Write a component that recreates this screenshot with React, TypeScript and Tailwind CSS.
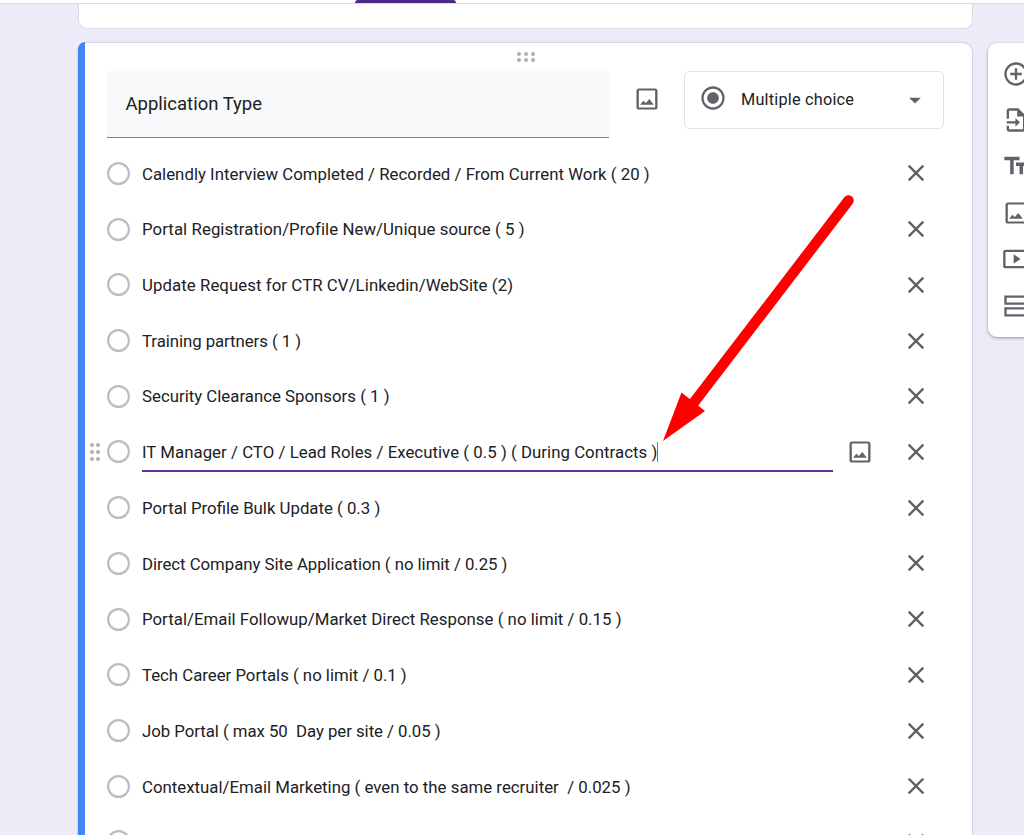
import type { ReactNode } from 'react';

interface Option { label: string; spacing: string; active?: boolean }

const OPTIONS: Option[] = [
  { label: 'Calendly Interview Completed / Recorded / From Current Work ( 20 )', spacing: 'tracking-[0.02px]' },
  { label: 'Portal Registration/Profile New/Unique source ( 5 )', spacing: 'tracking-[0.07px]' },
  { label: 'Update Request for CTR CV/Linkedin/WebSite (2)', spacing: 'tracking-[0.075px]' },
  { label: 'Training partners ( 1 )', spacing: 'tracking-[-0.06px]' },
  { label: 'Security Clearance Sponsors ( 1 )', spacing: 'tracking-[0.01px]' },
  { label: 'IT Manager / CTO / Lead Roles / Executive ( 0.5 ) ( During Contracts )', spacing: 'tracking-[0.04px]', active: true },
  { label: 'Portal Profile Bulk Update ( 0.3 )', spacing: 'tracking-normal' },
  { label: 'Direct Company Site Application ( no limit / 0.25 )', spacing: 'tracking-[-0.04px]' },
  { label: 'Portal/Email Followup/Market Direct Response ( no limit / 0.15 )', spacing: 'tracking-[0.03px]' },
  { label: 'Tech Career Portals ( no limit / 0.1 )', spacing: 'tracking-[-0.01px]' },
  { label: 'Job Portal ( max 50  Day per site / 0.05 )', spacing: 'tracking-[-0.04px]' },
  { label: 'Contextual/Email Marketing ( even to the same recruiter  / 0.025 )', spacing: 'tracking-[0.015px]' },
  { label: '', spacing: 'tracking-normal' },
];

function Icon({ children, className = '' }: { children: ReactNode; className?: string }) {
  return (
    <svg viewBox="0 0 24 24" fill="currentColor" className={`w-7 h-7 shrink-0 text-[#5f6368] ${className}`}>
      {children}
    </svg>
  );
}

function ImageIcon() {
  return (
    <Icon>
      <path d="M19 4.8v14.4H5V4.8h14M19 3H5c-1.1 0-2 .9-2 2v14c0 1.1.9 2 2 2h14c1.1 0 2-.9 2-2V5c0-1.1-.9-2-2-2z" />
      <path d="M6.2 17l2.6-3.6 2.3 2 2.9-3.5 3.8 5.1z" />
    </Icon>
  );
}

function CloseIcon() {
  return (
    <Icon>
      <path d="M19 6.41 17.59 5 12 10.59 6.41 5 5 6.41 10.59 12 5 17.59 6.41 19 12 13.41 17.59 19 19 17.59 13.41 12z" />
    </Icon>
  );
}

function Dots({ cols, rows, className }: { cols: number; rows: number; className: string }) {
  return (
    <div className={className}>
      {Array.from({ length: cols * rows }, (_, i) => (
        <span key={i} className="w-[4px] h-[4px] rounded-full bg-[#b0b0b0]" />
      ))}
    </div>
  );
}

function OptionRow({ label, spacing, active }: Option) {
  return (
    <div className="flex items-center h-[55.72px] shrink-0">
      <div className="w-[22px] shrink-0 flex justify-center pr-[2px]">
        {active && <Dots cols={2} rows={3} className="grid grid-cols-2 gap-x-[2px] gap-y-[3px]" />}
      </div>
      <svg viewBox="0 0 23 23" className="w-[23px] h-[23px] shrink-0">
        <circle cx="11.5" cy="11.5" r="10.4" fill="none" stroke="#bdbdbd" strokeWidth="2.2" />
      </svg>
      <div className={`ml-3 mt-px w-[691px] h-[39px] shrink-0 flex items-center border-b-2 ${active ? 'border-[#5b359b]' : 'border-transparent'}`}>
        <span className={`text-[16.8px] leading-6 whitespace-pre pt-[1.5px] ${spacing}`}>{label}</span>
        {active && <span className="w-px h-5 mt-px bg-[#777]" />}
      </div>
      <div className="ml-[13px] w-7 h-7 shrink-0">{active && <ImageIcon />}</div>
      <div className="ml-[27.9px]"><CloseIcon /></div>
    </div>
  );
}

function Toolbar() {
  return (
    <aside className="w-[56px] h-[294px] shrink-0 bg-white rounded-[9px] shadow-[0_1px_3px_rgba(60,64,67,0.5)] flex flex-col items-center pt-[7.5px]">
      <div className="h-[46.4px] flex items-center">
        <Icon>
          <path d="M13 7h-2v4H7v2h4v4h2v-4h4v-2h-4V7zm-1-5C6.48 2 2 6.48 2 12s4.48 10 10 10 10-4.48 10-10S17.52 2 12 2zm0 18c-4.41 0-8-3.59-8-8s3.59-8 8-8 8 3.59 8 8-3.59 8-8 8z" />
        </Icon>
      </div>
      <div className="h-[46.4px] flex items-center">
        <Icon>
          <path d="M14 2H6c-1.1 0-2 .9-2 2v7h2V4h7v5h5v11H6v-3H4v3c0 1.1.9 2 2 2h12c1.1 0 2-.9 2-2V8z" />
          <path d="M11.5 10.2v2.900H4v1.800h7.500v2.900l3.800-3.800z" />
        </Icon>
      </div>
      <div className="h-[46.4px] flex items-center">
        <Icon><path d="M2 4v3h5v12h3V7h5V4H2zm19 5h-9v3h3v7h3v-7h3V9z" /></Icon>
      </div>
      <div className="h-[46.4px] flex items-center"><ImageIcon /></div>
      <div className="h-[46.4px] flex items-center">
        <Icon>
          <path d="M10 8v8l6-4z" />
          <path d="M21 4H3c-1.1 0-2 .9-2 2v12c0 1.1.9 2 2 2h18c1.1 0 2-.9 2-2V6c0-1.1-.9-2-2-2zm0 14H3V6h18v12z" />
        </Icon>
      </div>
      <div className="h-[46.4px] flex items-center">
        <Icon>
          <path d="M2 3h20v8H2zM4 5v4h16V5zM2 13h20v8H2zM4 15v4h16v-4z" fillRule="evenodd" />
        </Icon>
      </div>
    </aside>
  );
}

export default function App() {
  return (
    <div className="relative w-[1024px] h-[835px] overflow-hidden bg-[#efeaf8] font-[Roboto,sans-serif] text-[#202124]">
      <header className="h-1 bg-white border-b border-[#dadce0] pl-[355px]">
        <div className="w-[101px] h-[3px] bg-[#4c2b87] rounded-t-[3px]" />
      </header>

      <div className="ml-[78px] w-[895px] h-[25px] bg-white border border-t-0 border-[#dadce0] rounded-b-[9px]" />

      <div className="flex items-start gap-[16px] pl-[78px] pt-[14px]">
        <main className="relative w-[894px] h-[810px] shrink-0 bg-white rounded-[9px] shadow-[0_0_2px_rgba(60,64,67,0.45)] flex flex-col">
          <div className="absolute left-0 -top-px w-[6.5px] h-[812px] bg-[#4285f4] rounded-tl-[8px]" />
          <Dots cols={3} rows={2} className="grid grid-cols-3 gap-x-[3px] gap-y-[2px] w-[18px] ml-[438.5px] mt-[9px]" />

          <div className="flex items-start pl-[29px] mt-[9px] h-[67px]">
            <div className="w-[502px] h-[67px] bg-[#f8f9fa] border-b border-[#80868b] flex items-center pl-[18.5px]">
              <span className="text-[18.5px] leading-7">Application Type</span>
            </div>
            <div className="ml-[24px] mt-[14px]"><ImageIcon /></div>
            <div className="ml-[23px] w-[260px] h-[58px] rounded-[5px] border border-[#e0e1e4] flex items-center pl-[13.5px]">
              <Icon className="mb-[4px]">
                <path d="M12 7c-2.76 0-5 2.24-5 5s2.24 5 5 5 5-2.24 5-5-2.24-5-5-5zm0-5C6.48 2 2 6.48 2 12s4.480 10 10 10 10-4.480 10-10S17.520 2 12 2zm0 18c-4.420 0-8-3.580-8-8s3.580-8 8-8 8 3.580 8 8-3.580 8-8 8z" />
              </Icon>
              <span className="ml-[14.5px] w-[160px] text-[16.25px] tracking-[0.22px]">Multiple choice</span>
              <Icon><path d="M7 10l5 5 5-5z" /></Icon>
            </div>
          </div>

          <div className="flex flex-col pl-[7px] mt-[7.5px]">
            {OPTIONS.map((o, i) => <OptionRow key={i} {...o} />)}
          </div>
        </main>
        <Toolbar />
      </div>

      <svg className="absolute left-0 top-0 w-[1024px] h-[835px] pointer-events-none" viewBox="0 0 1024 835">
        <line x1="848.500" y1="200.500" x2="692" y2="405" stroke="#ff0000" strokeWidth="10.500" strokeLinecap="round" />
        <polygon points="663,441 681.500,392.500 705,411" fill="#ff0000" />
      </svg>
    </div>
  );
}
